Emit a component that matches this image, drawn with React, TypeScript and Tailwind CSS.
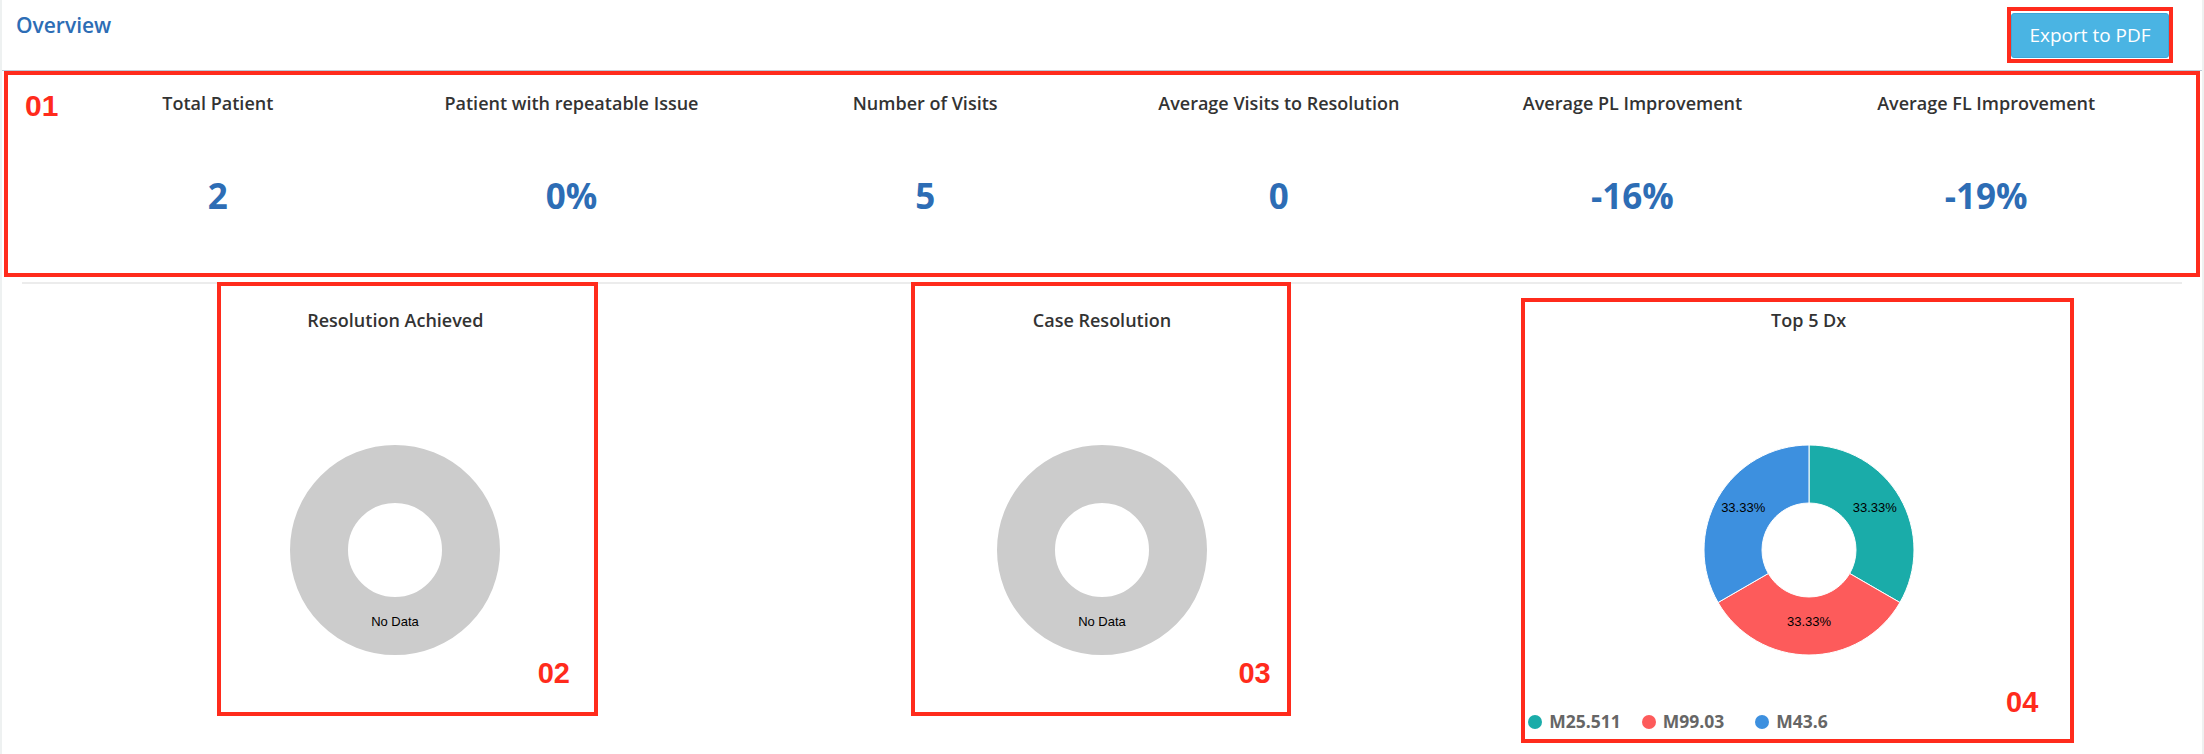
import React from "react";

const stats = [
    { label: "Total Patient", value: "2" },
    { label: "Patient with repeatable Issue", value: "0%" },
    { label: "Number of Visits", value: "5" },
    { label: "Average Visits to Resolution", value: "0" },
    { label: "Average PL Improvement", value: "-16%" },
    { label: "Average FL Improvement", value: "-19%" },
];

const legend = [
    { name: "M25.511", color: "bg-[#1aaca9]" },
    { name: "M99.03", color: "bg-[#fd5b5b]" },
    { name: "M43.6", color: "bg-[#3d90df]" },
];

function EmptyDonut() {
    return (
        <svg width="240" height="376" viewBox="0 0 240 376">
            <circle cx="120" cy="218" r="76" fill="none" stroke="#cccccc" strokeWidth="58" />
            <text
                x="120"
                y="294"
                textAnchor="middle"
                fontSize="13"
                fontFamily="'Liberation Sans', Arial, sans-serif"
                fill="#000"
            >
                No Data
            </text>
        </svg>
    );
}

function DxDonut() {
    const label = { fontSize: 13, fontFamily: "'Liberation Sans', Arial, sans-serif", fill: "#000" };
    return (
        <svg width="240" height="376" viewBox="0 0 240 376">
            <path d="M120 113 A105 105 0 0 1 210.93 270.5 L160.7 241.5 A47 47 0 0 0 120 171 Z" fill="#1aaca9" stroke="#fff" strokeWidth="1" />
            <path d="M210.93 270.5 A105 105 0 0 1 29.07 270.5 L79.3 241.5 A47 47 0 0 0 160.7 241.5 Z" fill="#fd5b5b" stroke="#fff" strokeWidth="1" />
            <path d="M29.07 270.5 A105 105 0 0 1 120 113 L120 171 A47 47 0 0 0 79.3 241.5 Z" fill="#3d90df" stroke="#fff" strokeWidth="1" />
            <text x="185.8" y="180" textAnchor="middle" {...label}>33.33%</text>
            <text x="120" y="294" textAnchor="middle" {...label}>33.33%</text>
            <text x="54.2" y="180" textAnchor="middle" {...label}>33.33%</text>
        </svg>
    );
}

function Tag({ children, className }: { children: React.ReactNode; className: string }) {
    return (
        <span
            className={`absolute text-[29px] leading-[29px] font-bold font-['Liberation_Sans',Arial,sans-serif] text-[#ff2b1c] ${className}`}
        >
            {children}
        </span>
    );
}

export default function App() {
    return (
        <div className="min-h-[754px] bg-[#eef1f1] px-[2px] font-['Open_Sans',sans-serif]">
            <div className="min-h-[754px] bg-white">
                {/* header */}
                <div className="flex h-[71px] items-start justify-between border-b border-[#bccad8]">
                    <h1 className="pl-[14px] pt-[11px] text-[21px] leading-[28px] font-semibold text-[#2d6db5]">
                        Overview
                    </h1>
                    <div className="mr-[29px] mt-[7px] border-4 border-[#ff2b1c] pt-[2px] pb-[1px]">
                        <button className="h-[45px] w-[158px] rounded-[3px] border border-[#3ba6d8] bg-[#4ab4e3] text-[19px] leading-none text-white">
                            Export to PDF
                        </button>
                    </div>
                </div>

                {/* stats */}
                <div className="relative mx-[2px] h-[206px] border-4 border-[#ff2b1c] px-[33px] pt-[16px]">
                    <Tag className="left-[17px] top-[16px] text-[30px] leading-[30px]">01</Tag>
                    <div className="grid grid-cols-6">
                        {stats.map((s) => (
                            <div key={s.label} className="flex flex-col items-center">
                                <div className="text-[18px] leading-[24px] font-semibold text-[#333]">{s.label}</div>
                                <div className="mt-[57px] text-[35px] leading-[48px] font-bold text-[#2d6db5]">
                                    {s.value}
                                </div>
                            </div>
                        ))}
                    </div>
                </div>

                <div className="mx-[20px] mt-[5px] h-[2px] bg-[#ececec]" />

                {/* charts */}
                <div className="grid grid-cols-3 px-[40px]">
                    <div className="relative flex flex-col items-center pt-[24px]">
                        <div className="text-[18px] leading-[24px] font-semibold text-[#333]">Resolution Achieved</div>
                        <EmptyDonut />
                        <div className="absolute left-[175px] top-[-2px] h-[434px] w-[381px] border-4 border-[#ff2b1c]">
                            <Tag className="right-[24px] top-[373px]">02</Tag>
                        </div>
                    </div>
                    <div className="relative flex flex-col items-center pt-[24px]">
                        <div className="text-[18px] leading-[24px] font-semibold text-[#333]">Case Resolution</div>
                        <EmptyDonut />
                        <div className="absolute left-[162px] top-[-2px] h-[434px] w-[380px] border-4 border-[#ff2b1c]">
                            <Tag className="right-[16px] top-[373px]">03</Tag>
                        </div>
                    </div>
                    <div className="relative flex flex-col items-center pt-[24px]">
                        <div className="text-[18px] leading-[24px] font-semibold text-[#333]">Top 5 Dx</div>
                        <DxDonut />
                        <div className="flex h-[28px] items-center self-stretch pl-[73px]">
                            {legend.map((l) => (
                                <div key={l.name} className="flex w-[113.5px] items-center gap-[7px]">
                                    <span className={`h-[14px] w-[14px] rounded-full ${l.color}`} />
                                    <span className="text-[17.5px] leading-none font-bold text-[#666]">{l.name}</span>
                                </div>
                            ))}
                        </div>
                        <div className="absolute left-[66px] top-[14px] h-[445px] w-[553px] border-4 border-[#ff2b1c]">
                            <Tag className="right-[32px] top-[386px]">04</Tag>
                        </div>
                    </div>
                </div>
            </div>
        </div>
    );
}
